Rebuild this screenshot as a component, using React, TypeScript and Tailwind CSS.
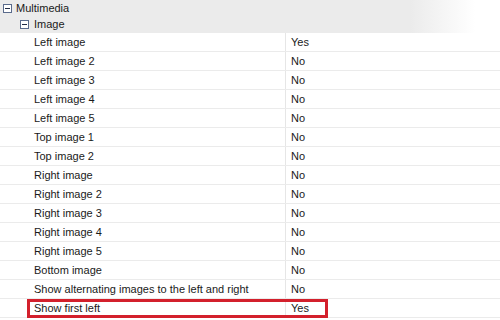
import React from "react";

const rows: [string, string][] = [
  ["Left image", "Yes"],
  ["Left image 2", "No"],
  ["Left image 3", "No"],
  ["Left image 4", "No"],
  ["Left image 5", "No"],
  ["Top image 1", "No"],
  ["Top image 2", "No"],
  ["Right image", "No"],
  ["Right image 2", "No"],
  ["Right image 3", "No"],
  ["Right image 4", "No"],
  ["Right image 5", "No"],
  ["Bottom image", "No"],
  ["Show alternating images to the left and right", "No"],
  ["Show first left", "Yes"],
];

function Minus() {
  return (
    <svg width="9" height="9" viewBox="0 0 9 9" className="shrink-0">
      <rect x="0.5" y="0.5" width="8" height="8" fill="#fff" stroke="#5a6b8c" />
      <rect x="2" y="4" width="5" height="1" fill="#1f2a44" />
    </svg>
  );
}

export default function App() {
  return (
    <div
      className="w-[500px] h-[320px] bg-white overflow-hidden text-[11px] text-[#1a1a1a]"
      style={{ fontFamily: '"Liberation Sans", Arial, sans-serif' }}
    >
      <div className="bg-[linear-gradient(to_right,#ebebeb_0px,#ebebeb_410px,#ffffff_475px)]">
        <div className="h-[16px] flex items-center pl-[3px] gap-[4px]">
          <Minus />
          <span>Multimedia</span>
        </div>
        <div className="h-[17px] flex items-center pl-[20px] gap-[5px]">
          <Minus />
          <span>Image</span>
        </div>
      </div>
      {rows.map(([name, val], i) => (
        <div
          key={i}
          className="relative h-[19px] flex border-b border-[#ebebeb]"
        >
          <div className="w-[286px] pl-[34px] flex items-center border-r border-[#e6e6e6]">
            {name}
          </div>
          <div className="pl-[5px] flex items-center">{val}</div>
          {i === rows.length - 1 && (
            <div className="absolute left-[27px] top-0 w-[301px] h-[19px] border-[3px] border-[#d3202c]" />
          )}
        </div>
      ))}
    </div>
  );
}
